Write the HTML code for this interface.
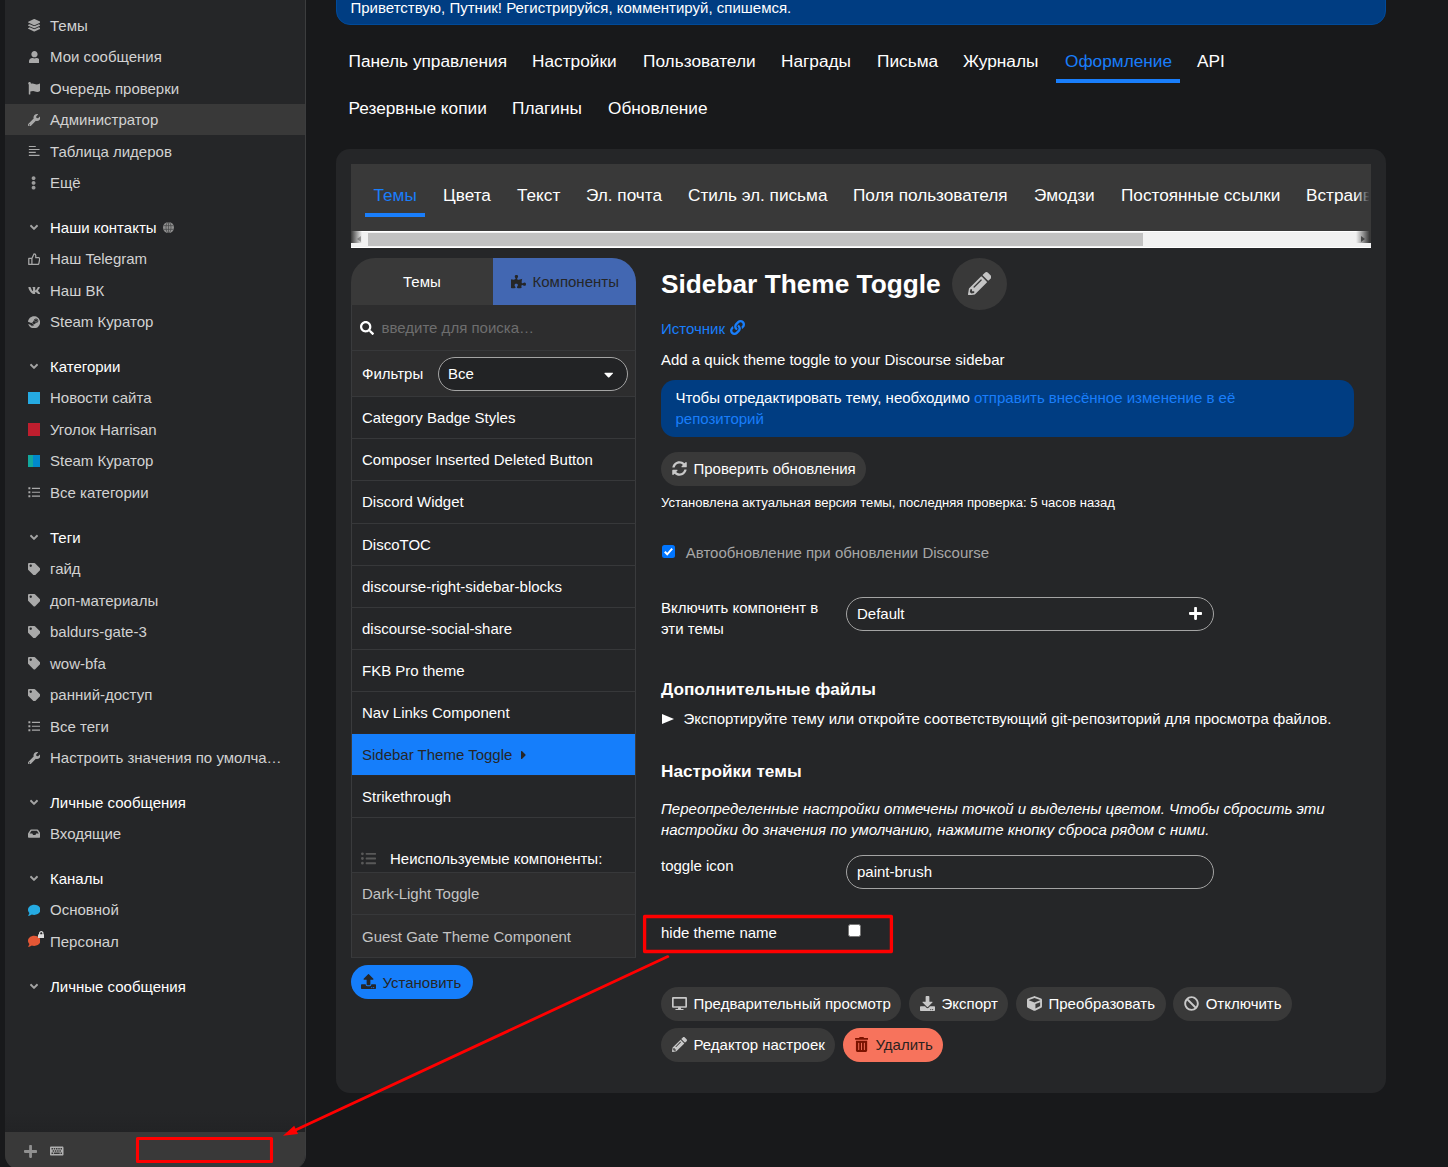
<!DOCTYPE html><html lang="ru"><head><meta charset="utf-8"><title>Sidebar Theme Toggle</title><style>
*{box-sizing:border-box}
html,body{margin:0;padding:0}
body{width:1448px;height:1167px;overflow:hidden;background:#18191b;color:#fff;font-family:"Liberation Sans",Arial,sans-serif;font-size:15px;position:relative}
.abs{position:absolute}
svg{display:block}
/* sidebar */
#sb{position:absolute;left:5px;top:-20px;width:301px;height:1189px;background:#252628;border-right:1px solid #3c3d3e;border-radius:0 0 14px 14px;overflow:hidden}
.row{position:absolute;left:0;width:300px;height:31.5px;line-height:31.5px;color:#d2d2d2;white-space:nowrap}
.row .ic{position:absolute;left:22px;top:0;width:14px;height:31.5px;display:flex;align-items:center;justify-content:center;color:#a9a9a9}
.row .tx{position:absolute;left:45px;top:0}
.row.hd{color:#fff}
.row.act{background:#393939}
#sbf{position:absolute;left:0;top:1152px;width:300px;height:37px;background:#393939}
/* main */
#banner{position:absolute;left:336px;top:-20px;width:1050px;height:45px;background:#003d82;border:1px solid #004a9a;border-radius:0 0 14px 14px}
.t{position:absolute;white-space:nowrap;line-height:20px}
.nav{font-size:17.2px}
#panel{position:absolute;left:336px;top:149px;width:1050px;height:943.5px;background:#252628;border-radius:14px}
#tabs{position:absolute;left:351px;top:164px;width:1020px;height:67px;background:#393939;overflow:hidden}
#scroll{position:absolute;left:351px;top:231px;width:1020px;height:17px;background:#f1f1f1;border-top:1px solid #fff;border-bottom:1px solid #fff}
.btn{position:absolute;height:33.5px;border-radius:17px;background:#393939;color:#fff;white-space:nowrap;line-height:33.5px}
.btn .bi{position:absolute;left:11px;top:0;height:33.5px;width:15px;display:flex;align-items:center;justify-content:center;color:#c8c8c8}
.btn .bt{position:absolute;left:32.5px;top:0}
.pill{position:absolute;border:1px solid #a4a4a4;border-radius:17px;background:#252628}
.li{position:absolute;left:351px;width:285px;border-left:1px solid #3a3b3d;border-right:1px solid #3a3b3d;border-bottom:1px solid #37383a;height:42.2px;line-height:42px;padding-left:10px;white-space:nowrap}
</style></head><body>
<div id="sb">
<div class="row " style="top:29.65px"><span class="ic"><svg viewBox="0 0 512 512" width="12.50" height="12.50" style=""><path fill="currentColor" d="M12.41 148.02l232.94 105.67c6.8 3.09 14.49 3.09 21.29 0l232.94-105.67c16.55-7.51 16.55-32.52 0-40.03L266.65 2.31a25.607 25.607 0 0 0-21.29 0L12.41 107.98c-16.55 7.51-16.55 32.53 0 40.04zm487.18 88.28l-58.09-26.33-161.64 73.27c-7.56 3.43-15.59 5.17-23.86 5.17s-16.29-1.74-23.86-5.17L70.51 209.97l-58.1 26.33c-16.55 7.5-16.55 32.5 0 40l232.94 105.59c6.8 3.08 14.49 3.08 21.29 0L499.59 276.3c16.55-7.5 16.55-32.5 0-40zm0 127.8l-57.87-26.23-161.86 73.37c-7.56 3.43-15.59 5.17-23.86 5.17s-16.29-1.74-23.86-5.17L70.29 337.87 12.41 364.1c-16.55 7.5-16.55 32.5 0 40l232.94 105.59c6.8 3.08 14.49 3.08 21.29 0L499.59 404.1c16.55-7.5 16.55-32.5 0-40z"/></svg></span><span class="tx">Темы</span></div>
<div class="row " style="top:61.15px"><span class="ic"><svg viewBox="0 0 448 512" width="10.94" height="12.50" style=""><path fill="currentColor" d="M224 256c70.7 0 128-57.3 128-128S294.7 0 224 0 96 57.3 96 128s57.3 128 128 128zm89.6 32h-16.7c-22.2 10.2-46.9 16-72.9 16s-50.6-5.8-72.9-16h-16.7C60.2 288 0 348.2 0 422.4V464c0 26.5 21.5 48 48 48h352c26.5 0 48-21.5 48-48v-41.6c0-74.2-60.2-134.4-134.4-134.4z"/></svg></span><span class="tx">Мои сообщения</span></div>
<div class="row " style="top:92.65px"><span class="ic"><svg viewBox="0 0 512 512" width="12.50" height="12.50" style=""><path fill="currentColor" d="M349.565 98.783C295.978 98.783 251.721 64 184.348 64c-24.955 0-47.309 4.384-68.045 12.013a55.947 55.947 0 0 0 3.586-23.562C118.117 24.015 94.806 1.206 66.338.048 34.345-1.254 8 24.296 8 56c0 19.026 9.497 35.825 24 45.945V488c0 13.255 10.745 24 24 24h16c13.255 0 24-10.745 24-24v-94.4c28.311-12.064 63.582-22.122 114.435-22.122 53.588 0 97.844 34.783 165.217 34.783 48.169 0 86.667-16.294 122.505-40.858C506.84 359.452 512 349.571 512 339.045v-243.1c0-23.393-24.269-38.87-45.485-29.016-34.338 15.948-76.454 31.854-116.95 31.854z"/></svg></span><span class="tx">Очередь проверки</span></div>
<div class="abs" style="left:0;top:124px;width:300px;height:31px;background:#393939"></div>
<div class="row " style="top:124.15px"><span class="ic"><svg viewBox="0 0 512 512" width="12.50" height="12.50" style=""><path fill="currentColor" d="M507.73 109.1c-2.24-9.03-13.54-12.09-20.12-5.51l-74.36 74.36-67.88-11.31-11.31-67.88 74.36-74.36c6.62-6.62 3.43-17.9-5.66-20.16-47.38-11.74-99.55.91-136.58 37.93-39.64 39.64-50.55 97.1-34.05 147.2L18.74 402.76c-24.99 24.99-24.99 65.51 0 90.5 24.99 24.99 65.51 24.99 90.5 0l213.21-213.21c50.12 16.71 107.47 5.68 147.37-34.22 37.07-37.07 49.7-89.32 37.91-136.73zM64 472c-13.25 0-24-10.75-24-24 0-13.26 10.75-24 24-24s24 10.74 24 24c0 13.25-10.75 24-24 24z"/></svg></span><span class="tx">Администратор</span></div>
<div class="row " style="top:155.65px"><span class="ic"><svg viewBox="0 0 512 512" width="12.50" height="12.50" style=""><path fill="currentColor" d="M35 40h283v46H35zM35 159h438v46H35zM35 278h283v46H35zM35 401h438v46H35z"/></svg></span><span class="tx">Таблица лидеров</span></div>
<div class="row " style="top:187.15px"><span class="ic"><svg viewBox="0 0 192 512" width="5.18" height="13.80" style=""><path fill="#9c9c9c" d="M96 184c39.8 0 72 32.2 72 72s-32.2 72-72 72-72-32.2-72-72 32.2-72 72-72zM24 80c0 39.8 32.2 72 72 72s72-32.2 72-72S135.8 8 96 8 24 40.2 24 80zm0 352c0 39.8 32.2 72 72 72s72-32.2 72-72-32.2-72-72-72-72 32.2-72 72z"/></svg></span><span class="tx">Ещё</span></div>
<div class="row hd" style="top:231.65px"><span class="ic"><svg viewBox="0 0 320 512" width="8.00" height="12.80" style=""><path fill="#a4a4a4" d="M143 352.3L7 216.3c-9.4-9.4-9.4-24.6 0-33.9l22.6-22.6c9.4-9.4 24.6-9.4 33.9 0l96.4 96.4 96.4-96.4c9.4-9.4 24.6-9.4 33.9 0l22.6 22.6c9.4 9.4 9.4 24.6 0 33.9l-136 136c-9.2 9.4-24.4 9.4-33.8 0z"/></svg></span><span class="tx">Наши контакты</span><span style="position:absolute;left:158px;top:10.5px"><svg viewBox="0 0 16 16" width="11" height="11"><circle cx="8" cy="8" r="8" fill="#8e8e8e"/><g stroke="#2a2b2d" stroke-width="1" fill="none" opacity=".75"><ellipse cx="8" cy="8" rx="3.6" ry="8"/><path d="M0.8 5.300H15.200M0.800 10.700H15.200M8 0V16"/></g></svg></span></div>
<div class="row " style="top:263.15px"><span class="ic"><svg viewBox="0 0 24 24" width="12.5" height="12.5" fill="none" stroke="currentColor" stroke-width="2.4" stroke-linejoin="round"><path d="M7.500 22V10.500l4.200-9c1.800 0 3.200 1.400 3.200 3.200V9h5.300c1.400 0 2.400 1.200 2.200 2.600l-1.500 8.500c-.2 1.100-1.100 1.900-2.200 1.900H7.500zM1.500 10.500h6V22h-6z"/></svg></span><span class="tx">Наш Telegram</span></div>
<div class="row " style="top:294.65px"><span class="ic"><svg viewBox="0 0 576 512" width="12.50" height="11.11" style=""><path fill="currentColor" d="M545 117.700c3.700-12.500 0-21.700-17.800-21.700h-58.900c-15 0-21.900 7.900-25.600 16.700 0 0-30 73.100-72.400 120.500-13.700 13.700-20 18.100-27.500 18.100-3.700 0-9.400-4.400-9.400-16.900V117.700c0-15-4.200-21.700-16.600-21.700h-92.600c-9.400 0-15 7-15 13.500 0 14.200 21.200 17.500 23.400 57.500v86.800c0 19-3.400 22.500-10.900 22.500-20 0-68.600-73.400-97.400-157.400-5.800-16.300-11.500-22.900-26.600-22.900H38.800c-16.800 0-20.200 7.900-20.200 16.700 0 15.600 20 93.100 93.100 195.500C160.400 378.100 229 416 291.400 416c37.500 0 42.100-8.400 42.100-22.900 0-66.800-3.400-73.100 15.400-73.100 8.700 0 23.700 4.400 58.700 38.100 40 40 46.600 57.900 69 57.900h58.900c16.800 0 25.300-8.400 20.400-25-11.200-34.900-86.900-106.700-90.300-111.500-8.700-11.200-6.200-16.200 0-26.200.1-.1 72-101.300 79.400-135.600z"/></svg></span><span class="tx">Наш ВК</span></div>
<div class="row " style="top:326.15px"><span class="ic"><svg viewBox="0 0 496 512" width="12.11" height="12.50" style=""><path fill="currentColor" d="M496 256c0 137-111.200 248-248.400 248-113.800 0-209.600-76.300-239-180.400l95.200 39.300c6.400 32.100 34.900 56.400 68.900 56.400 39.200 0 71.900-32.400 70.200-73.500l84.500-60.200c52.100 1.300 95.800-40.900 95.800-93.500 0-51.600-42-93.500-93.700-93.500s-93.700 42-93.700 93.500v1.200L176.600 279c-15.500-.9-30.700 3.400-43.500 12.100L0 236.100C10.200 108.400 117.100 8 247.600 8 384.800 8 496 119 496 256zM155.700 384.300l-30.500-12.600a52.790 52.790 0 0 0 27.200 25.800c26.900 11.200 57.800-1.600 69-28.400 5.400-13 5.500-27.300.1-40.300-5.400-13-15.500-23.200-28.500-28.600-12.900-5.400-26.700-5.200-38.900-.6l31.500 13c19.800 8.200 29.200 30.900 20.900 50.700-8.300 19.900-31 29.200-50.800 21zm173.800-129.900c-34.400 0-62.400-28-62.400-62.300s28-62.300 62.400-62.300 62.400 28 62.400 62.300-27.900 62.300-62.400 62.300zm.1-15.600c25.900 0 46.900-21 46.900-46.800 0-25.900-21-46.800-46.900-46.800s-46.900 21-46.900 46.800c.1 25.800 21.100 46.800 46.900 46.800z"/></svg></span><span class="tx">Steam Куратор</span></div>
<div class="row hd" style="top:370.65px"><span class="ic"><svg viewBox="0 0 320 512" width="8.00" height="12.80" style=""><path fill="#a4a4a4" d="M143 352.3L7 216.3c-9.4-9.4-9.4-24.6 0-33.9l22.6-22.6c9.4-9.4 24.6-9.4 33.9 0l96.4 96.4 96.4-96.4c9.4-9.4 24.6-9.4 33.9 0l22.6 22.6c9.4 9.4 9.4 24.6 0 33.9l-136 136c-9.2 9.4-24.4 9.4-33.8 0z"/></svg></span><span class="tx">Категории</span></div>
<div class="row " style="top:402.15px"><span class="ic"><span style="display:block;width:12.5px;height:12.5px;background:#25aae2"></span></span><span class="tx">Новости сайта</span></div>
<div class="row " style="top:433.65px"><span class="ic"><span style="display:block;width:12.5px;height:12.5px;background:#bf1e2e"></span></span><span class="tx">Уголок Harrisan</span></div>
<div class="row " style="top:465.15px"><span class="ic"><span style="display:block;width:12.5px;height:12.5px;background:linear-gradient(90deg,#12a89d 0 45%,#0088cc 45% 100%)"></span></span><span class="tx">Steam Куратор</span></div>
<div class="row " style="top:496.65px"><span class="ic"><svg viewBox="0 0 512 512" width="12.50" height="12.50" style=""><path fill="currentColor" d="M16 56h80v80H16zM16 216h80v80H16zM16 376h80v80H16zM160 72h336v48H160zM160 232h336v48H160zM160 392h336v48H160z"/></svg></span><span class="tx">Все категории</span></div>
<div class="row hd" style="top:541.65px"><span class="ic"><svg viewBox="0 0 320 512" width="8.00" height="12.80" style=""><path fill="#a4a4a4" d="M143 352.3L7 216.3c-9.4-9.4-9.4-24.6 0-33.9l22.6-22.6c9.4-9.4 24.6-9.4 33.9 0l96.4 96.4 96.4-96.4c9.4-9.4 24.6-9.4 33.9 0l22.6 22.6c9.4 9.4 9.4 24.6 0 33.9l-136 136c-9.2 9.4-24.4 9.4-33.8 0z"/></svg></span><span class="tx">Теги</span></div>
<div class="row " style="top:573.15px"><span class="ic"><svg viewBox="0 0 512 512" width="12.50" height="12.50" style=""><path fill="currentColor" d="M0 252.118V48C0 21.49 21.49 0 48 0h204.118a48 48 0 0 1 33.941 14.059l211.882 211.882c18.745 18.745 18.745 49.137 0 67.882L293.823 497.941c-18.745 18.745-49.137 18.745-67.882 0L14.059 286.059A48 48 0 0 1 0 252.118zM112 64c-26.51 0-48 21.49-48 48s21.49 48 48 48 48-21.49 48-48-21.49-48-48-48z"/></svg></span><span class="tx">гайд</span></div>
<div class="row " style="top:604.65px"><span class="ic"><svg viewBox="0 0 512 512" width="12.50" height="12.50" style=""><path fill="currentColor" d="M0 252.118V48C0 21.49 21.49 0 48 0h204.118a48 48 0 0 1 33.941 14.059l211.882 211.882c18.745 18.745 18.745 49.137 0 67.882L293.823 497.941c-18.745 18.745-49.137 18.745-67.882 0L14.059 286.059A48 48 0 0 1 0 252.118zM112 64c-26.51 0-48 21.49-48 48s21.49 48 48 48 48-21.49 48-48-21.49-48-48-48z"/></svg></span><span class="tx">доп-материалы</span></div>
<div class="row " style="top:636.15px"><span class="ic"><svg viewBox="0 0 512 512" width="12.50" height="12.50" style=""><path fill="currentColor" d="M0 252.118V48C0 21.49 21.49 0 48 0h204.118a48 48 0 0 1 33.941 14.059l211.882 211.882c18.745 18.745 18.745 49.137 0 67.882L293.823 497.941c-18.745 18.745-49.137 18.745-67.882 0L14.059 286.059A48 48 0 0 1 0 252.118zM112 64c-26.51 0-48 21.49-48 48s21.49 48 48 48 48-21.49 48-48-21.49-48-48-48z"/></svg></span><span class="tx">baldurs-gate-3</span></div>
<div class="row " style="top:667.65px"><span class="ic"><svg viewBox="0 0 512 512" width="12.50" height="12.50" style=""><path fill="currentColor" d="M0 252.118V48C0 21.49 21.49 0 48 0h204.118a48 48 0 0 1 33.941 14.059l211.882 211.882c18.745 18.745 18.745 49.137 0 67.882L293.823 497.941c-18.745 18.745-49.137 18.745-67.882 0L14.059 286.059A48 48 0 0 1 0 252.118zM112 64c-26.51 0-48 21.49-48 48s21.49 48 48 48 48-21.49 48-48-21.49-48-48-48z"/></svg></span><span class="tx">wow-bfa</span></div>
<div class="row " style="top:699.15px"><span class="ic"><svg viewBox="0 0 512 512" width="12.50" height="12.50" style=""><path fill="currentColor" d="M0 252.118V48C0 21.49 21.49 0 48 0h204.118a48 48 0 0 1 33.941 14.059l211.882 211.882c18.745 18.745 18.745 49.137 0 67.882L293.823 497.941c-18.745 18.745-49.137 18.745-67.882 0L14.059 286.059A48 48 0 0 1 0 252.118zM112 64c-26.51 0-48 21.49-48 48s21.49 48 48 48 48-21.49 48-48-21.49-48-48-48z"/></svg></span><span class="tx">ранний-доступ</span></div>
<div class="row " style="top:730.65px"><span class="ic"><svg viewBox="0 0 512 512" width="12.50" height="12.50" style=""><path fill="currentColor" d="M16 56h80v80H16zM16 216h80v80H16zM16 376h80v80H16zM160 72h336v48H160zM160 232h336v48H160zM160 392h336v48H160z"/></svg></span><span class="tx">Все теги</span></div>
<div class="row " style="top:762.15px"><span class="ic"><svg viewBox="0 0 512 512" width="12.50" height="12.50" style=""><path fill="currentColor" d="M507.73 109.1c-2.24-9.03-13.54-12.09-20.12-5.51l-74.36 74.36-67.88-11.31-11.31-67.88 74.36-74.36c6.62-6.62 3.43-17.9-5.66-20.16-47.38-11.74-99.55.91-136.58 37.93-39.64 39.64-50.55 97.1-34.05 147.2L18.74 402.76c-24.99 24.99-24.99 65.51 0 90.5 24.99 24.99 65.51 24.99 90.5 0l213.21-213.21c50.12 16.71 107.47 5.68 147.37-34.22 37.07-37.07 49.7-89.32 37.91-136.73zM64 472c-13.25 0-24-10.75-24-24 0-13.26 10.75-24 24-24s24 10.74 24 24c0 13.25-10.75 24-24 24z"/></svg></span><span class="tx">Настроить значения по умолча…</span></div>
<div class="row hd" style="top:806.65px"><span class="ic"><svg viewBox="0 0 320 512" width="8.00" height="12.80" style=""><path fill="#a4a4a4" d="M143 352.3L7 216.3c-9.4-9.4-9.4-24.6 0-33.9l22.6-22.6c9.4-9.4 24.6-9.4 33.9 0l96.4 96.4 96.4-96.4c9.4-9.4 24.6-9.4 33.9 0l22.6 22.6c9.4 9.4 9.4 24.6 0 33.9l-136 136c-9.2 9.4-24.4 9.4-33.8 0z"/></svg></span><span class="tx">Личные сообщения</span></div>
<div class="row " style="top:838.15px"><span class="ic"><svg viewBox="0 0 576 512" width="12.50" height="11.11" style=""><path fill="currentColor" d="M567.938 243.908L462.25 85.374A48.003 48.003 0 0 0 422.311 64H153.689a48 48 0 0 0-39.938 21.374L8.062 243.908A47.994 47.994 0 0 0 0 270.533V400c0 26.51 21.49 48 48 48h480c26.51 0 48-21.49 48-48V270.533a47.994 47.994 0 0 0-8.062-26.625zM162.252 128h251.497l85.333 128H376l-32 64H232l-32-64H76.918l85.334-128z"/></svg></span><span class="tx">Входящие</span></div>
<div class="row hd" style="top:882.65px"><span class="ic"><svg viewBox="0 0 320 512" width="8.00" height="12.80" style=""><path fill="#a4a4a4" d="M143 352.3L7 216.3c-9.4-9.4-9.4-24.6 0-33.9l22.6-22.6c9.4-9.4 24.6-9.4 33.9 0l96.4 96.4 96.4-96.4c9.4-9.4 24.6-9.4 33.9 0l22.6 22.6c9.4 9.4 9.4 24.6 0 33.9l-136 136c-9.2 9.4-24.4 9.4-33.8 0z"/></svg></span><span class="tx">Каналы</span></div>
<div class="row " style="top:914.15px"><span class="ic"><svg viewBox="0 0 512 512" width="12.50" height="12.50" style=""><path fill="#25aae2" d="M256 32C114.6 32 0 125.1 0 240c0 49.6 21.4 95 57 130.7C44.5 421.1 2.7 466 2.2 466.5c-2.2 2.3-2.8 5.7-1.5 8.7S4.8 480 8 480c66.3 0 116-31.8 140.6-51.4 32.7 12.3 69 19.4 107.400 19.400 141.400 0 256-93.100 256-208S397.400 32 256 32z"/></svg></span><span class="tx">Основной</span></div>
<div class="row " style="top:945.65px"><span class="ic"><svg viewBox="0 0 512 512" width="12.50" height="12.50" style=""><path fill="#e45735" d="M256 32C114.6 32 0 125.1 0 240c0 49.6 21.4 95 57 130.7C44.5 421.1 2.7 466 2.2 466.5c-2.2 2.3-2.8 5.7-1.5 8.7S4.8 480 8 480c66.3 0 116-31.8 140.6-51.4 32.7 12.3 69 19.4 107.400 19.400 141.400 0 256-93.100 256-208S397.400 32 256 32z"/></svg></span><span class="tx">Персонал</span><span style="position:absolute;left:32.5px;top:5px;color:#ddd"><svg viewBox="0 0 448 512" width="6.56" height="7.50" style=""><path fill="currentColor" d="M400 224h-24v-72C376 68.2 307.8 0 224 0S72 68.2 72 152v72H48c-26.5 0-48 21.5-48 48v192c0 26.5 21.5 48 48 48h352c26.5 0 48-21.5 48-48V272c0-26.5-21.5-48-48-48zm-104 0H152v-72c0-39.700 32.300-72 72-72s72 32.300 72 72v72z"/></svg></span></div>
<div class="row hd" style="top:990.65px"><span class="ic"><svg viewBox="0 0 320 512" width="8.00" height="12.80" style=""><path fill="#a4a4a4" d="M143 352.3L7 216.3c-9.4-9.4-9.4-24.6 0-33.9l22.6-22.6c9.4-9.4 24.6-9.4 33.9 0l96.4 96.4 96.4-96.4c9.4-9.4 24.6-9.4 33.9 0l22.6 22.6c9.4 9.4 9.4 24.6 0 33.9l-136 136c-9.2 9.4-24.4 9.4-33.8 0z"/></svg></span><span class="tx">Личные сообщения</span></div>
<div class="abs" style="left:0;top:1132px;width:300px;height:20px;background:linear-gradient(180deg,rgba(34,35,37,0),rgba(34,35,37,1))"></div>
<div id="sbf">
<span class="abs" style="left:18.8px;top:11.8px;color:#909090"><svg viewBox="0 0 448 512" width="13.12" height="15.00" style=""><path fill="currentColor" d="M416 208H272V64c0-17.67-14.33-32-32-32h-32c-17.67 0-32 14.33-32 32v144H32c-17.67 0-32 14.33-32 32v32c0 17.67 14.33 32 32 32h144v144c0 17.67 14.33 32 32 32h32c17.67 0 32-14.33 32-32V304h144c17.67 0 32-14.33 32-32v-32c0-17.67-14.33-32-32-32z"/></svg></span>
<span class="abs" style="left:45px;top:13.4px;color:#b0b0b0"><svg viewBox="0 0 576 512" width="13.50" height="12.00" style=""><path fill="currentColor" d="M48 64h480c26.500 0 48 21.500 48 48v288c0 26.500-21.500 48-48 48H48c-26.500 0-48-21.500-48-48V112c0-26.500 21.500-48 48-48zM64 128v64h64v-64zm96 0v64h64v-64zm96 0v64h64v-64zm96 0v64h64v-64zm96 0v64h64v-64zM112 224v64h64v-64zm96 0v64h64v-64zm96 0v64h64v-64zm96 0v64h64v-64zM64 320v64h64v-64zm96 0v64h256v-64zm288 0v64h64v-64z"/></svg></span>
</div>
</div>
<div id="banner"></div>
<div class="t " style="left:350.5px;top:-2.20px;font-size:15px;color:#fff;font-weight:400;">Приветствую, Путник! Регистрируйся, комментируй, спишемся.</div>
<div class="t " style="left:348.5px;top:51.02px;font-size:17.25px;color:#fff;font-weight:400;">Панель управления</div>
<div class="t " style="left:532px;top:51.02px;font-size:17.25px;color:#fff;font-weight:400;">Настройки</div>
<div class="t " style="left:643px;top:51.02px;font-size:17.25px;color:#fff;font-weight:400;">Пользователи</div>
<div class="t " style="left:781px;top:51.02px;font-size:17.25px;color:#fff;font-weight:400;">Награды</div>
<div class="t " style="left:877px;top:51.02px;font-size:17.25px;color:#fff;font-weight:400;">Письма</div>
<div class="t " style="left:963px;top:51.02px;font-size:17.25px;color:#fff;font-weight:400;">Журналы</div>
<div class="t " style="left:1065px;top:51.02px;font-size:17.25px;color:#197efb;font-weight:400;">Оформление</div>
<div class="t " style="left:1197px;top:51.02px;font-size:17.25px;color:#fff;font-weight:400;">API</div>
<div class="abs" style="left:1056px;top:79px;width:124px;height:4px;background:#197efb"></div>
<div class="t " style="left:348.5px;top:97.77px;font-size:17.25px;color:#fff;font-weight:400;">Резервные копии</div>
<div class="t " style="left:512px;top:97.77px;font-size:17.25px;color:#fff;font-weight:400;">Плагины</div>
<div class="t " style="left:608px;top:97.77px;font-size:17.25px;color:#fff;font-weight:400;">Обновление</div>
<div id="panel"></div>
<div id="tabs">
</div>
<div class="abs" style="left:351px;top:164px;width:1020px;height:67.5px;overflow:hidden">
<div class="t" style="left:22.5px;top:20.54px;font-size:17.2px;color:#197efb">Темы</div>
<div class="t" style="left:92px;top:20.54px;font-size:17.2px;color:#fff">Цвета</div>
<div class="t" style="left:166px;top:20.54px;font-size:17.2px;color:#fff">Текст</div>
<div class="t" style="left:235px;top:20.54px;font-size:17.2px;color:#fff">Эл. почта</div>
<div class="t" style="left:337px;top:20.54px;font-size:17.2px;color:#fff">Стиль эл. письма</div>
<div class="t" style="left:502px;top:20.54px;font-size:17.2px;color:#fff">Поля пользователя</div>
<div class="t" style="left:683px;top:20.54px;font-size:17.2px;color:#fff">Эмодзи</div>
<div class="t" style="left:770px;top:20.54px;font-size:17.2px;color:#fff">Постоянные ссылки</div>
<div class="t" style="left:955px;top:20.54px;font-size:17.2px;color:#fff">Встраивание</div>
<div class="abs" style="left:14px;top:48.5px;width:60px;height:4px;background:#197efb"></div>
</div>
<div id="scroll">
<div class="abs" style="left:17px;top:1px;width:775px;height:13px;background:#c1c1c1"></div>
<div class="abs" style="left:6px;top:3.5px;width:0;height:0;border-top:3.5px solid transparent;border-bottom:3.5px solid transparent;border-right:4px solid #a3a3a3"></div>
<div class="abs" style="left:1010px;top:3.5px;width:0;height:0;border-top:3.5px solid transparent;border-bottom:3.5px solid transparent;border-left:4px solid #505050"></div>
</div>
<div class="abs" style="left:351px;top:164px;width:11px;height:79px;background:linear-gradient(90deg,#393939,rgba(57,57,57,0))"></div>
<div class="abs" style="left:1356px;top:164px;width:15px;height:79px;background:linear-gradient(270deg,#393939 10%,rgba(57,57,57,0))"></div>
<div class="abs" style="left:351px;top:257.5px;width:285px;height:47.5px;border-radius:24px 24px 0 0;overflow:hidden;background:#393939">
<div class="abs" style="left:142px;top:0;width:143px;height:47.5px;background:#4267b2"></div>
</div>
<div class="t " style="left:403px;top:272.30px;font-size:15px;color:#fff;font-weight:400;">Темы</div>
<span class="abs" style="left:510.5px;top:275.2px;color:#252628"><svg viewBox="0 0 576 512" width="15.00" height="13.33" style=""><path fill="currentColor" d="M519.442 288.651c-41.519 0-59.5 31.593-82.058 31.593C377.409 320.244 432 144 432 144s-196.288 80-196.288-3.297c0-35.827 36.288-46.25 36.288-85.985C272 19.216 243.885 0 210.539 0c-34.654 0-66.366 18.891-66.366 56.346 0 41.364 31.711 59.277 31.711 81.75C175.885 207.719 0 166.758 0 166.758v333.237s178.635 41.047 178.635-28.662c0-22.473-40-40.107-40-81.471 0-37.456 29.25-56.346 63.577-56.346 33.673 0 61.788 19.216 61.788 54.717 0 39.735-36.288 50.158-36.288 85.985 0 60.803 129.675 25.73 181.23 25.73 0 0-34.725-120.101 25.827-120.101 35.962 0 46.423 36.152 86.308 36.152C556.712 416 576 387.99 576 354.443c0-34.199-18.962-65.792-56.558-65.792z"/></svg></span>
<div class="t " style="left:532.5px;top:272.30px;font-size:15px;color:#252628;font-weight:400;">Компоненты</div>
<div class="abs" style="left:351px;top:305px;width:285px;height:46px;background:#2d2d2e;border-left:1px solid #3a3b3d;border-right:1px solid #3a3b3d;border-bottom:1px solid #37383a"></div>
<span class="abs" style="left:360px;top:320.5px;color:#fff"><svg viewBox="0 0 512 512" width="14.00" height="14.00" style=""><path fill="currentColor" d="M505 442.7L405.3 343c-4.5-4.5-10.6-7-17-7H372c27.6-35.3 44-79.7 44-128C416 93.1 322.9 0 208 0S0 93.1 0 208s93.1 208 208 208c48.3 0 92.7-16.4 128-44v16.3c0 6.4 2.5 12.5 7 17l99.7 99.7c9.4 9.4 24.6 9.4 33.9 0l28.3-28.3c9.4-9.4 9.4-24.6.1-34zM208 336c-70.7 0-128-57.2-128-128 0-70.7 57.2-128 128-128 70.7 0 128 57.2 128 128 0 70.7-57.2 128-128 128z"/></svg></span>
<div class="t " style="left:381.5px;top:317.80px;font-size:15px;color:#6e6e6e;font-weight:400;">введите для поиска…</div>
<div class="abs" style="left:351px;top:351px;width:285px;height:45.5px;background:#2d2d2e;border-left:1px solid #3a3b3d;border-right:1px solid #3a3b3d;border-bottom:1px solid #37383a"></div>
<div class="t " style="left:362px;top:363.80px;font-size:15px;color:#fff;font-weight:400;">Фильтры</div>
<div class="pill" style="left:438px;top:357px;width:190px;height:34px;background:#222325"></div>
<div class="t " style="left:448px;top:363.80px;font-size:15px;color:#fff;font-weight:400;">Все</div>
<span class="abs" style="left:604px;top:366.5px;color:#fff"><svg viewBox="0 0 320 512" width="9.38" height="15.00" style=""><path fill="currentColor" d="M31.3 192h257.3c17.8 0 26.7 21.5 14.1 34.1L174.1 354.8c-7.8 7.8-20.5 7.8-28.3 0L17.2 226.1C4.6 213.5 13.5 192 31.3 192z"/></svg></span>
<div class="li" style="top:397px;height:42px;line-height:41.6px;">Category Badge Styles</div>
<div class="li" style="top:439px;height:42px;line-height:41.6px;">Composer Inserted Deleted Button</div>
<div class="li" style="top:481px;height:43px;line-height:41.6px;">Discord Widget</div>
<div class="li" style="top:524px;height:42px;line-height:41.6px;">DiscoTOC</div>
<div class="li" style="top:566px;height:42px;line-height:41.6px;">discourse-right-sidebar-blocks</div>
<div class="li" style="top:608px;height:42px;line-height:41.6px;">discourse-social-share</div>
<div class="li" style="top:650px;height:42px;line-height:41.6px;">FKB Pro theme</div>
<div class="li" style="top:692px;height:42px;line-height:41.6px;">Nav Links Component</div>
<div class="li" style="top:733px;height:43px;line-height:43.6px;background:#157efb;color:#252628;border-bottom:none;box-shadow:inset 0 1px 0 #2a2829,inset 0 -1px 0 #2a2829;">Sidebar Theme Toggle<span style="display:inline-block;vertical-align:-2px;margin-left:9px"><svg viewBox="0 0 192 512" width="5.25" height="14.00" style=""><path fill="currentColor" d="M0 384.662V127.338c0-17.818 21.543-26.741 34.142-14.142l128.662 128.662c7.81 7.81 7.81 20.474 0 28.284L34.142 398.804C21.543 411.404 0 402.48 0 384.662z"/></svg></span></div>
<div class="li" style="top:776px;height:42px;line-height:41.6px;">Strikethrough</div>
<div class="li" style="top:818px;height:55px"></div>
<span class="abs" style="left:361px;top:851px;color:#595959"><svg viewBox="0 0 512 512" width="15.00" height="15.00" style=""><path fill="currentColor" d="M48 48a48 48 0 1 0 48 48 48 48 0 0 0-48-48zm0 160a48 48 0 1 0 48 48 48 48 0 0 0-48-48zm0 160a48 48 0 1 0 48 48 48 48 0 0 0-48-48zm448 16H176a16 16 0 0 0-16 16v32a16 16 0 0 0 16 16h320a16 16 0 0 0 16-16v-32a16 16 0 0 0-16-16zm0-320H176a16 16 0 0 0-16 16v32a16 16 0 0 0 16 16h320a16 16 0 0 0 16-16V80a16 16 0 0 0-16-16zm0 160H176a16 16 0 0 0-16 16v32a16 16 0 0 0 16 16h320a16 16 0 0 0 16-16v-32a16 16 0 0 0-16-16z"/></svg></span>
<div class="t " style="left:390px;top:849.30px;font-size:15px;color:#fff;font-weight:400;">Неиспользуемые компоненты:</div>
<div class="li" style="top:873px;height:42px;line-height:41.6px;background:#2d2d2e;color:#c4c4c4">Dark-Light Toggle</div>
<div class="li" style="top:915px;height:43px;line-height:43.4px;background:#2d2d2e;color:#c4c4c4">Guest Gate Theme Component</div>
<div class="btn" style="left:351px;top:965px;width:122px;height:34px;line-height:35px;background:#157efb;color:#252628"><span class="bi" style="color:#252628;left:10px"><svg viewBox="0 0 512 512" width="15.00" height="15.00" style=""><path fill="currentColor" d="M296 384h-80c-13.3 0-24-10.7-24-24V192h-87.7c-17.8 0-26.7-21.5-14.1-34.1L242.3 5.7c7.5-7.5 19.8-7.5 27.3 0l152.2 152.2c12.6 12.6 3.7 34.1-14.1 34.1H320v168c0 13.3-10.7 24-24 24zm216-8v112c0 13.3-10.7 24-24 24H24c-13.3 0-24-10.7-24-24V376c0-13.3 10.7-24 24-24h136v8c0 30.9 25.1 56 56 56h80c30.9 0 56-25.1 56-56v-8h136c13.3 0 24 10.7 24 24zm-124 88c0-11-9-20-20-20s-20 9-20 20 9 20 20 20 20-9 20-20zm64 0c0-11-9-20-20-20s-20 9-20 20 9 20 20 20 20-9 20-20z"/></svg></span><span class="bt" style="left:31.5px">Установить</span></div>
<div class="t " style="left:661px;top:267.90px;font-size:26.27px;color:#fff;font-weight:700;line-height:32px">Sidebar Theme Toggle</div>
<div class="abs" style="left:952px;top:257.6px;width:55px;height:52.4px;border-radius:50%;background:#393939;color:#c4c4c4;display:flex;align-items:center;justify-content:center"><svg viewBox="0 0 512 512" width="23.40" height="23.40" style=""><path fill="currentColor" d="M497.9 142.1l-46.1 46.1c-4.7 4.7-12.3 4.7-17 0l-111-111c-4.7-4.7-4.7-12.3 0-17l46.1-46.1c18.7-18.7 49.1-18.7 67.9 0l60.1 60.1c18.8 18.7 18.8 49.1 0 67.9zM284.2 99.8L21.6 362.4.4 483.9c-2.9 16.4 11.4 30.6 27.8 27.8l121.5-21.3 262.6-262.6c4.7-4.7 4.7-12.3 0-17l-111-111c-4.8-4.7-12.4-4.7-17.1 0zM124.1 339.9c-5.5-5.5-5.5-14.3 0-19.8l154-154c5.5-5.5 14.3-5.5 19.8 0s5.5 14.3 0 19.8l-154 154c-5.5 5.5-14.3 5.5-19.8 0zM88 424h48v36.3l-64.5 11.3-31.1-31.1L51.7 376H88v48z"/></svg></div>
<div class="t " style="left:661px;top:318.55px;font-size:15px;color:#197efb;font-weight:400;">Источник</div>
<span class="abs" style="left:730.2px;top:320px;color:#197efb"><svg viewBox="0 0 512 512" width="15.00" height="15.00" style=""><path fill="currentColor" d="M326.612 185.391c59.747 59.809 58.927 155.698.36 214.59-.11.12-.24.25-.36.37l-67.2 67.2c-59.27 59.27-155.699 59.262-214.96 0-59.27-59.26-59.27-155.7 0-214.96l37.106-37.106c9.84-9.84 26.786-3.3 27.294 10.606.648 17.722 3.826 35.527 9.69 52.721 1.986 5.822.567 12.262-3.783 16.612l-13.087 13.087c-28.026 28.026-28.905 73.66-1.155 101.96 28.024 28.579 74.086 28.749 102.325.51l67.2-67.19c28.191-28.191 28.073-73.757 0-101.83-3.701-3.694-7.429-6.564-10.341-8.569a16.037 16.037 0 0 1-6.947-12.606c-.396-10.567 3.348-21.456 11.698-29.806l21.054-21.055c5.521-5.521 14.182-6.199 20.584-1.731a152.482 152.482 0 0 1 20.522 17.197zM467.547 44.449c-59.261-59.262-155.69-59.27-214.96 0l-67.2 67.2c-.12.12-.25.25-.36.37-58.566 58.892-59.387 154.781.36 214.59a152.454 152.454 0 0 0 20.521 17.196c6.402 4.468 15.064 3.789 20.584-1.731l21.054-21.055c8.35-8.35 12.094-19.239 11.698-29.806a16.037 16.037 0 0 0-6.947-12.606c-2.912-2.005-6.64-4.875-10.341-8.569-28.073-28.073-28.191-73.639 0-101.83l67.2-67.19c28.239-28.239 74.3-28.069 102.325.51 27.75 28.3 26.872 73.934-1.155 101.96l-13.087 13.087c-4.35 4.35-5.769 10.79-3.783 16.612 5.864 17.194 9.042 34.999 9.69 52.721.509 13.906 17.454 20.446 27.294 10.606l37.106-37.106c59.271-59.259 59.271-155.699.001-214.959z"/></svg></span>
<div class="t " style="left:661px;top:349.80px;font-size:15px;color:#fff;font-weight:400;">Add a quick theme toggle to your Discourse sidebar</div>
<div class="abs" style="left:661px;top:380px;width:693px;height:56.5px;border-radius:14px;background:#003d82"></div>
<div class="t " style="left:675.5px;top:388.00px;font-size:15px;color:#fff;font-weight:400;">Чтобы отредактировать тему, необходимо <span style="color:#197efb">отправить внесённое изменение в её</span></div>
<div class="t " style="left:675.5px;top:409.00px;font-size:15px;color:#197efb;font-weight:400;">репозиторий</div>
<div class="btn" style="left:661px;top:452px;width:205px;"><span class="bi" style=""><svg viewBox="0 0 512 512" width="15.00" height="15.00" style=""><path fill="currentColor" d="M370.72 133.28C339.458 104.008 298.888 87.962 255.848 88c-77.458.068-144.328 53.178-162.791 126.85-1.344 5.363-6.122 9.15-11.651 9.15H24.103c-7.498 0-13.194-6.807-11.807-14.176C33.933 94.924 134.813 8 256 8c66.448 0 126.791 26.136 171.315 68.685L463.03 40.97C478.149 25.851 504 36.559 504 57.941V192c0 13.255-10.745 24-24 24H345.941c-21.382 0-32.09-25.851-16.971-40.971l41.75-41.749zM32 296h134.059c21.382 0 32.09 25.851 16.971 40.971l-41.75 41.75c31.262 29.273 71.835 45.319 114.876 45.28 77.418-.07 144.315-53.144 162.787-126.849 1.344-5.363 6.122-9.15 11.651-9.15h57.304c7.498 0 13.194 6.807 11.807 14.176C478.067 417.076 377.187 504 256 504c-66.448 0-126.791-26.136-171.315-68.685L48.97 471.03C33.851 486.149 8 475.441 8 454.059V320c0-13.255 10.745-24 24-24z"/></svg></span><span class="bt">Проверить обновления</span></div>
<div class="t " style="left:661px;top:492.88px;font-size:13.06px;color:#fff;font-weight:400;">Установлена актуальная версия темы, последняя проверка: 5 часов назад</div>
<div class="abs" style="left:662px;top:545px;width:13px;height:13px;border-radius:2.5px;background:#0075ff"><svg viewBox="0 0 13 13" width="13" height="13"><path d="M2.8 6.8l2.4 2.5 5-5.6" stroke="#fff" stroke-width="2" fill="none"/></svg></div>
<div class="t " style="left:685.75px;top:543.00px;font-size:15px;color:#a7a7a7;font-weight:400;">Автообновление при обновлении Discourse</div>
<div class="t " style="left:661px;top:598.00px;font-size:15px;color:#fff;font-weight:400;">Включить компонент в</div>
<div class="t " style="left:661px;top:618.55px;font-size:15px;color:#fff;font-weight:400;">эти темы</div>
<div class="pill" style="left:846px;top:597px;width:368px;height:34px"></div>
<div class="t " style="left:857px;top:603.55px;font-size:15px;color:#fff;font-weight:400;">Default</div>
<span class="abs" style="left:1189px;top:606px;color:#fff"><svg viewBox="0 0 448 512" width="13.12" height="15.00" style=""><path fill="currentColor" d="M416 208H272V64c0-17.67-14.33-32-32-32h-32c-17.67 0-32 14.33-32 32v144H32c-17.67 0-32 14.33-32 32v32c0 17.67 14.33 32 32 32h144v144c0 17.67 14.33 32 32 32h32c17.67 0 32-14.33 32-32V304h144c17.67 0 32-14.33 32-32v-32c0-17.67-14.33-32-32-32z"/></svg></span>
<div class="t " style="left:661px;top:679.04px;font-size:17.2px;color:#fff;font-weight:700;">Дополнительные файлы</div>
<div class="abs" style="left:662px;top:713.7px;width:0;height:0;border-top:5px solid transparent;border-bottom:5px solid transparent;border-left:12.2px solid #fff"></div>
<div class="t " style="left:683.5px;top:708.55px;font-size:15px;color:#fff;font-weight:400;">Экспортируйте тему или откройте соответствующий git-репозиторий для просмотра файлов.</div>
<div class="t " style="left:661px;top:761.04px;font-size:17.2px;color:#fff;font-weight:700;">Настройки темы</div>
<div class="t " style="left:661px;top:798.55px;font-size:15px;color:#fff;font-weight:400;font-style:italic">Переопределенные настройки отмечены точкой и выделены цветом. Чтобы сбросить эти</div>
<div class="t " style="left:661px;top:819.80px;font-size:15px;color:#fff;font-weight:400;font-style:italic">настройки до значения по умолчанию, нажмите кнопку сброса рядом с ними.</div>
<div class="t " style="left:661px;top:855.55px;font-size:15px;color:#fff;font-weight:400;">toggle icon</div>
<div class="pill" style="left:846px;top:855px;width:368px;height:34px"></div>
<div class="t " style="left:857px;top:862.30px;font-size:15px;color:#fff;font-weight:400;">paint-brush</div>
<div class="t " style="left:661px;top:923.00px;font-size:15px;color:#fff;font-weight:400;">hide theme name</div>
<div class="abs" style="left:848px;top:924px;width:13px;height:13px;border-radius:2.5px;background:#fff;border:1px solid #767676"></div>
<div class="btn" style="left:661px;top:987px;width:239.5px;"><span class="bi" style=""><svg viewBox="0 0 576 512" width="15.00" height="13.33" style=""><path fill="currentColor" d="M528 0H48C21.5 0 0 21.5 0 48v320c0 26.5 21.5 48 48 48h192l-16 48h-72c-13.3 0-24 10.7-24 24s10.7 24 24 24h272c13.3 0 24-10.7 24-24s-10.7-24-24-24h-72l-16-48h192c26.5 0 48-21.5 48-48V48c0-26.5-21.5-48-48-48zm-16 352H64V64h448v288z"/></svg></span><span class="bt">Предварительный просмотр</span></div>
<div class="btn" style="left:909px;top:987px;width:98.5px;"><span class="bi" style=""><svg viewBox="0 0 512 512" width="15.00" height="15.00" style=""><path fill="currentColor" d="M216 0h80c13.3 0 24 10.7 24 24v168h87.7c17.8 0 26.7 21.5 14.1 34.1L269.7 378.3c-7.5 7.5-19.8 7.5-27.3 0L90.1 226.1c-12.6-12.6-3.7-34.1 14.1-34.1H192V24c0-13.3 10.7-24 24-24zm296 376v112c0 13.3-10.7 24-24 24H24c-13.3 0-24-10.7-24-24V376c0-13.3 10.7-24 24-24h146.7l49 49c20.1 20.1 52.5 20.1 72.6 0l49-49H488c13.3 0 24 10.7 24 24zm-124 88c0-11-9-20-20-20s-20 9-20 20 9 20 20 20 20-9 20-20zm64 0c0-11-9-20-20-20s-20 9-20 20 9 20 20 20 20-9 20-20z"/></svg></span><span class="bt">Экспорт</span></div>
<div class="btn" style="left:1016px;top:987px;width:150px;"><span class="bi" style=""><svg viewBox="0 0 512 512" width="15.00" height="15.00" style=""><path fill="currentColor" d="M239.1 6.3l-208 78c-18.7 7-31.1 25-31.1 45v225.1c0 18.2 10.3 34.8 26.5 42.9l208 104c13.5 6.8 29.4 6.8 42.9 0l208-104c16.3-8.1 26.5-24.8 26.5-42.9V129.3c0-20-12.4-37.9-31.1-44.9l-208-78C262 2.2 250 2.2 239.1 6.3zM256 68.4l192 72v1.1l-192 78-192-78v-1.1l192-72zm32 356V275.5l160-65v133.9l-160 80z"/></svg></span><span class="bt">Преобразовать</span></div>
<div class="btn" style="left:1173.2px;top:987px;width:118.8px;"><span class="bi" style=""><svg viewBox="0 0 512 512" width="15.00" height="15.00" style=""><path fill="currentColor" d="M256 8C119.034 8 8 119.033 8 256s111.034 248 248 248 248-111.034 248-248S392.967 8 256 8zm130.108 117.892c65.448 65.448 70 165.481 20.677 235.637L150.47 105.216c70.204-49.356 170.226-44.735 235.638 20.676zM125.892 386.108c-65.448-65.448-70-165.481-20.677-235.637L361.53 406.784c-70.203 49.356-170.226 44.736-235.638-20.676z"/></svg></span><span class="bt">Отключить</span></div>
<div class="btn" style="left:661px;top:1028px;width:174px;line-height:34.6px;"><span class="bi" style=""><svg viewBox="0 0 512 512" width="15.00" height="15.00" style=""><path fill="currentColor" d="M497.9 142.1l-46.1 46.1c-4.7 4.7-12.3 4.7-17 0l-111-111c-4.7-4.7-4.7-12.3 0-17l46.1-46.1c18.7-18.7 49.1-18.7 67.9 0l60.1 60.1c18.8 18.7 18.8 49.1 0 67.9zM284.2 99.8L21.6 362.4.4 483.9c-2.9 16.4 11.4 30.6 27.8 27.8l121.5-21.3 262.6-262.6c4.7-4.7 4.7-12.3 0-17l-111-111c-4.8-4.7-12.4-4.7-17.1 0zM124.1 339.9c-5.5-5.5-5.5-14.3 0-19.8l154-154c5.5-5.5 14.3-5.5 19.8 0s5.5 14.3 0 19.8l-154 154c-5.5 5.5-14.3 5.5-19.8 0zM88 424h48v36.3l-64.5 11.3-31.1-31.1L51.7 376H88v48z"/></svg></span><span class="bt">Редактор настроек</span></div>
<div class="btn" style="left:843px;top:1028px;width:100px;line-height:34.6px;background:#f7735c;color:#2a2220;"><span class="bi" style="color:#7a1300;"><svg viewBox="0 0 448 512" width="13.12" height="15.00" style=""><path fill="currentColor" d="M32 464a48 48 0 0 0 48 48h288a48 48 0 0 0 48-48V128H32zm272-256a16 16 0 0 1 32 0v224a16 16 0 0 1-32 0zm-96 0a16 16 0 0 1 32 0v224a16 16 0 0 1-32 0zm-96 0a16 16 0 0 1 32 0v224a16 16 0 0 1-32 0zM432 32H312l-9.4-18.7A24 24 0 0 0 281.1 0H166.8a23.72 23.72 0 0 0-21.4 13.3L136 32H16A16 16 0 0 0 0 48v32a16 16 0 0 0 16 16h416a16 16 0 0 0 16-16V48a16 16 0 0 0-16-16z"/></svg></span><span class="bt">Удалить</span></div>
<svg class="abs" style="left:0;top:0" width="1448" height="1167" viewBox="0 0 1448 1167">
<rect x="644.6" y="916.5" width="246.8" height="35" fill="none" stroke="#ff0000" stroke-width="3.3" stroke-linejoin="round"/>
<rect x="137.5" y="1138.5" width="134" height="23" fill="none" stroke="#ff0000" stroke-width="3.1" stroke-linejoin="round"/>
<line x1="667.8" y1="956.6" x2="294" y2="1130.8" stroke="#ff0000" stroke-width="2.8" stroke-linecap="round"/>
<path d="M283 1135.8 L294.2 1125.7 L298 1133.9 Z" fill="#ff0000"/>
</svg>
</body></html>
